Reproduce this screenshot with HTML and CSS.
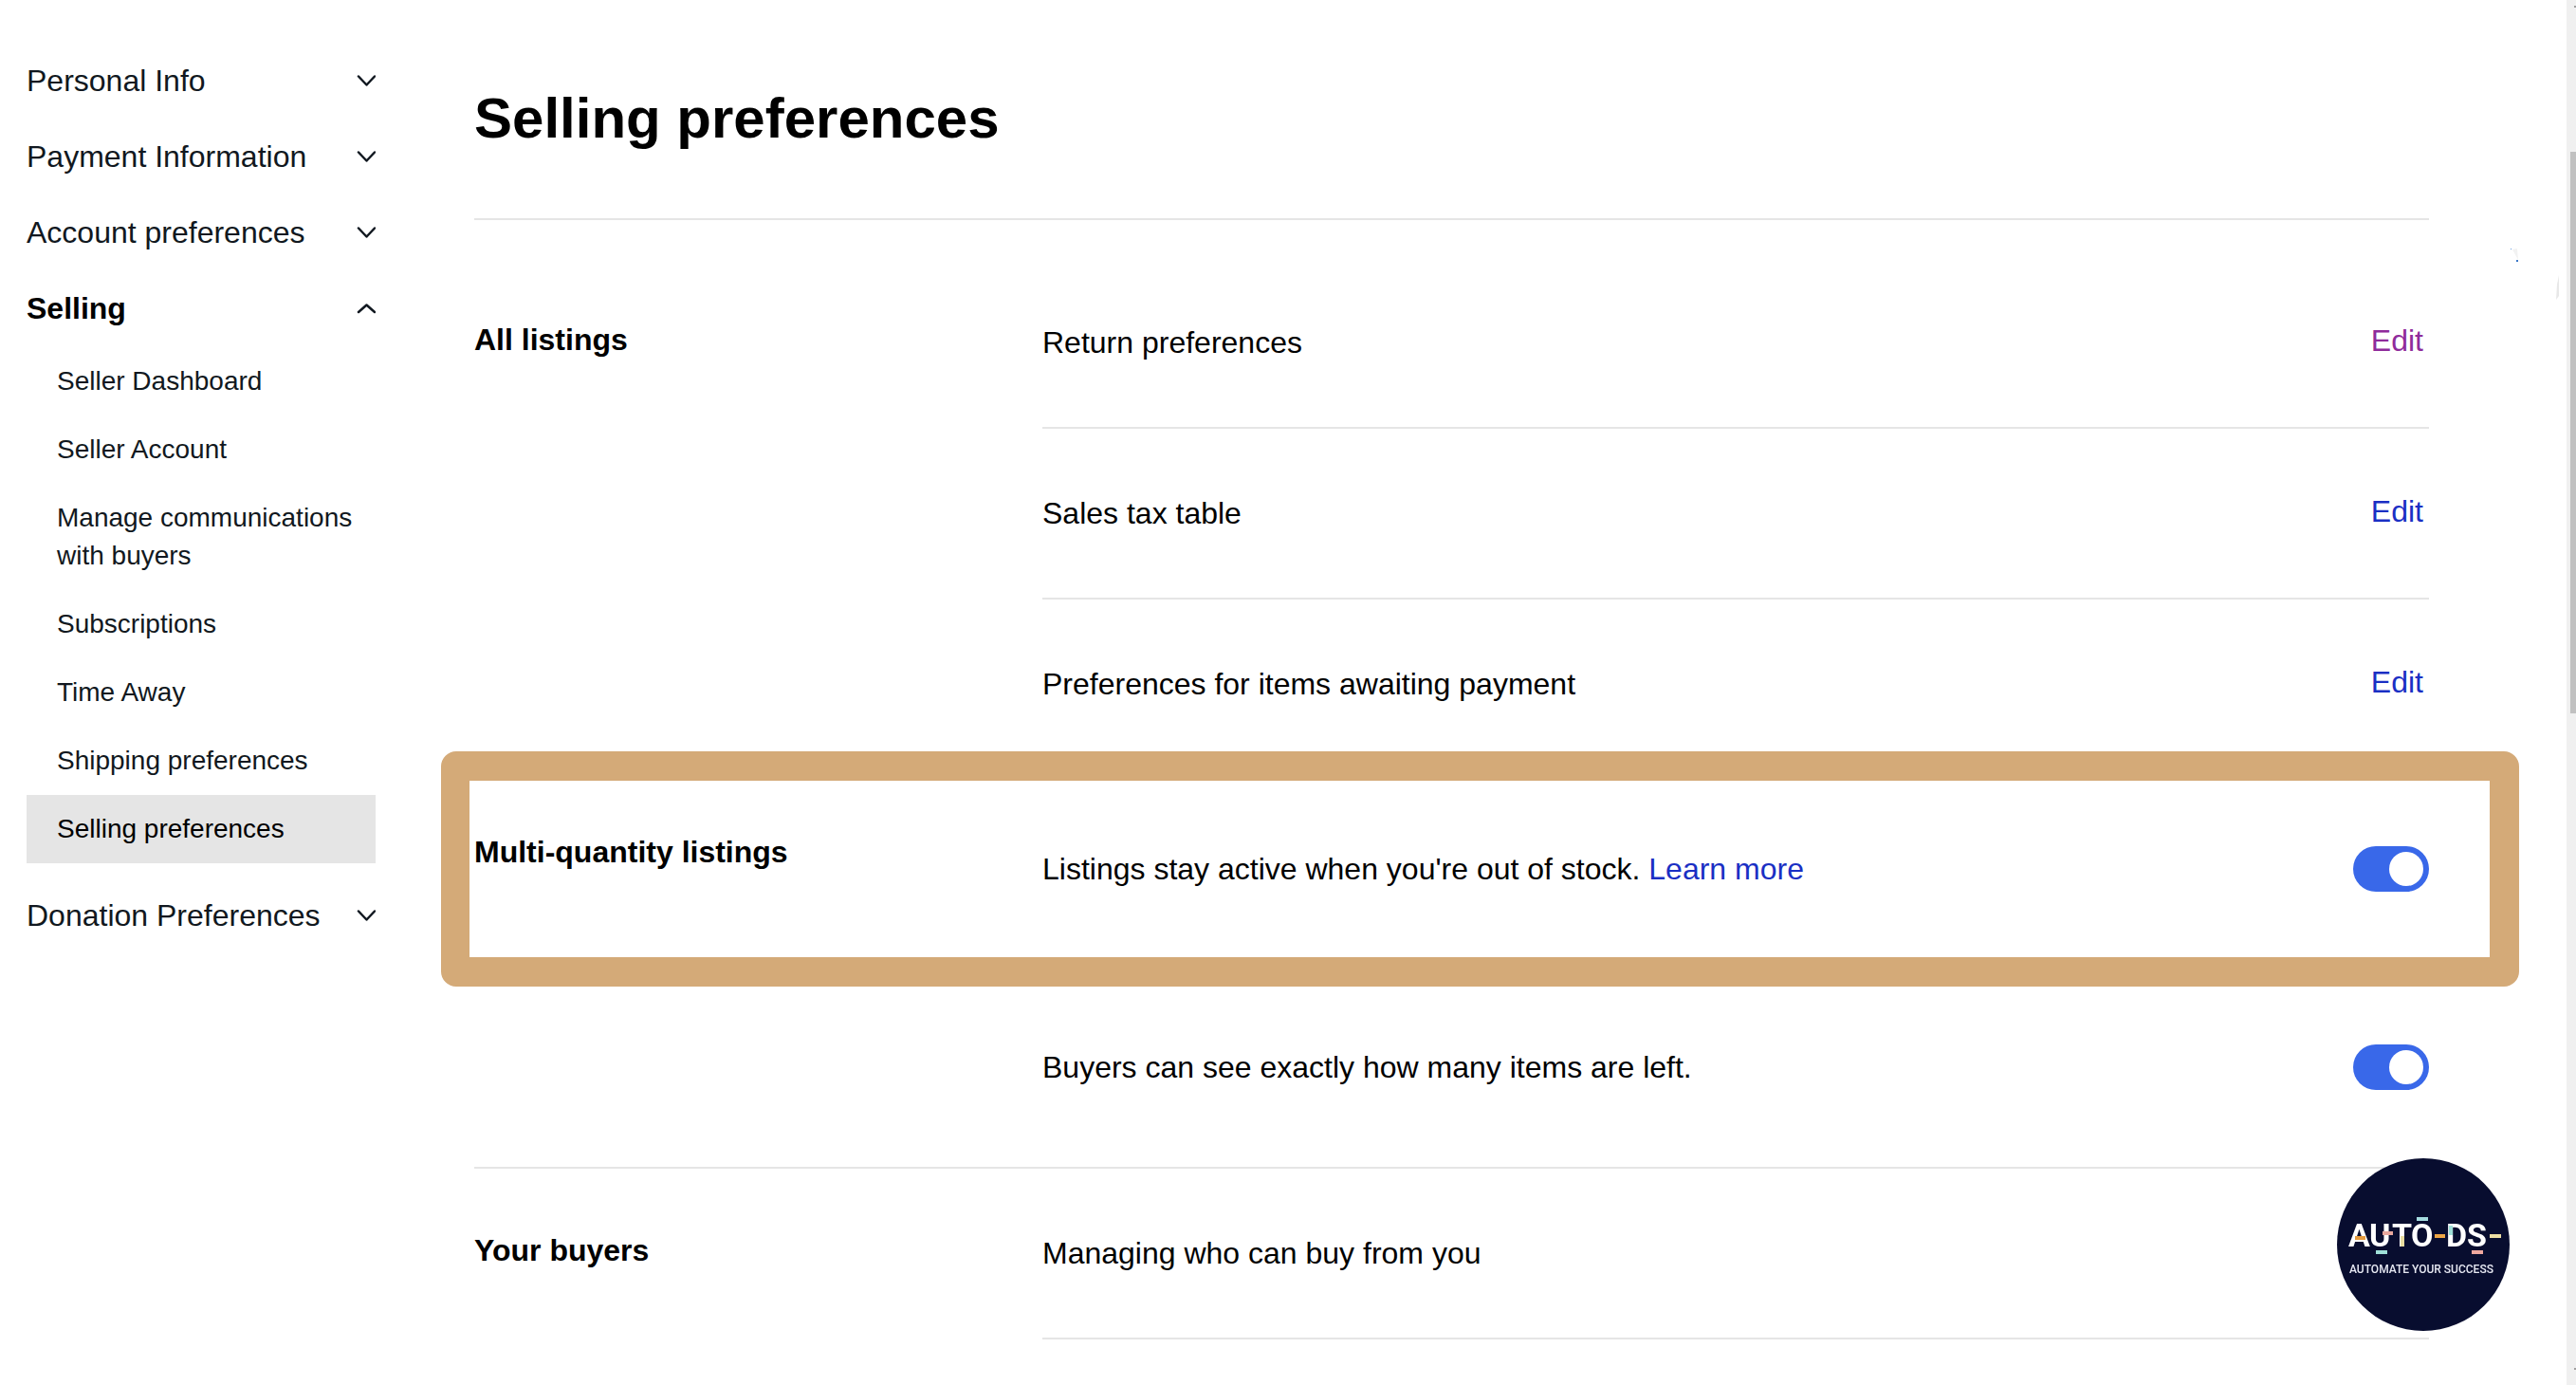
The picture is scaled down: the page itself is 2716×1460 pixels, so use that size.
FILE: index.html
```html
<!doctype html>
<html lang="en">
	<head>
		<meta charset="utf-8">
		<meta name="viewport" content="width=device-width">

		<title>Selling preferences</title>

		<link rel="stylesheet" href="styles.css">
	</head>

	<body>

		<div class="page">

			<nav class="sidebar">
				<button class="menu" type="button">Personal Info
					<svg class="chevron" viewBox="0 0 20 14"><path d="M2 2.5 L10.5 11.5 L19 2.5"/></svg>
				</button>
				<button class="menu" type="button">Payment Information
					<svg class="chevron" viewBox="0 0 20 14"><path d="M2 2.5 L10.5 11.5 L19 2.5"/></svg>
				</button>
				<button class="menu" type="button">Account preferences
					<svg class="chevron" viewBox="0 0 20 14"><path d="M2 2.5 L10.5 11.5 L19 2.5"/></svg>
				</button>
				<button class="menu open" type="button">Selling
					<svg class="chevron" viewBox="0 0 20 14"><path d="M2 11 L10.5 3.5 L19 11"/></svg>
				</button>
				<ul class="submenu">
					<li><a href="#">Seller Dashboard</a></li>
					<li><a href="#">Seller Account</a></li>
					<li><a href="#">Manage communications with buyers</a></li>
					<li><a href="#">Subscriptions</a></li>
					<li><a href="#">Time Away</a></li>
					<li><a href="#">Shipping preferences</a></li>
					<li><a class="current" href="#">Selling preferences</a></li>
				</ul>
				<button class="menu" type="button">Donation Preferences
					<svg class="chevron" viewBox="0 0 20 14"><path d="M2 2.5 L10.5 11.5 L19 2.5"/></svg>
				</button>
			</nav>

			<main>
				<h1>Selling preferences</h1>

				<section>
					<h2>All listings</h2>
					<div class="rows">
						<div class="row"><span>Return preferences</span><a class="edit visited" href="#">Edit</a></div>
						<div class="row"><span>Sales tax table</span><a class="edit" href="#">Edit</a></div>
						<div class="row"><span>Preferences for items awaiting payment</span><a class="edit" href="#">Edit</a></div>
					</div>
				</section>

				<section class="quantity">
					<h2>Multi-quantity listings</h2>
					<div class="rows">
						<div class="row tall">
							<span><label for="stay-active">Listings stay active when you're out of stock.</label> <a href="#">Learn more</a></span>
							<input class="switch" type="checkbox" id="stay-active" checked>
						</div>
						<div class="row tall">
							<label for="items-left">Buyers can see exactly how many items are left.</label>
							<input class="switch" type="checkbox" id="items-left" checked>
						</div>
					</div>
					<div class="highlight"></div>
				</section>

				<section>
					<h2>Your buyers</h2>
					<div class="rows">
						<div class="row line"><span>Managing who can buy from you</span></div>
					</div>
				</section>
			</main>

		</div>

		<svg class="badge" viewBox="0 0 182 182">
			<circle cx="91" cy="91" r="91" fill="#080d2f"/>
			<g fill="#fff" font-weight="bold" font-size="34">
				<text x="12" y="93">A</text>
				<text x="34" y="93">U</text>
				<text x="58" y="93">T</text>
				<text x="78" y="93">O</text>
				<text x="115" y="93">D</text>
				<text x="137" y="93">S</text>
			</g>
			<text x="13" y="121" fill="#e6e8f2" font-size="12" font-weight="500">AUTOMATE YOUR SUCCESS</text>
			<rect x="19" y="82" width="11" height="4" fill="#e59a3c"/>
			<rect x="41" y="97" width="12" height="4" fill="#9fe0d8"/>
			<rect x="48" y="77" width="11" height="4" fill="#e8a79d"/>
			<rect x="67" y="82" width="4" height="11" fill="#e8dca0"/>
			<rect x="84" y="62" width="12" height="4" fill="#a5dbe0"/>
			<rect x="103" y="80" width="11" height="4" fill="#eda545"/>
			<rect x="118" y="71" width="4" height="10" fill="#9fe0d8"/>
			<rect x="142" y="97" width="12" height="4" fill="#efa79e"/>
			<rect x="161" y="80" width="12" height="4" fill="#eedfa4"/>
		</svg>

		<svg class="specks" viewBox="0 0 56 56">
			<path d="M2 1 L7 0 L8 12 Z" fill="#f2f2f2"/>
			<rect x="0" y="0" width="1" height="1" fill="#6a9bdc"/>
			<rect x="6" y="12" width="2" height="2" fill="#3c78c8"/>
			<path d="M51 28 L51 50 L48 54 L49 38 Z" fill="#e8e8e8"/>
		</svg>

		<div class="scrollbar"><div class="thumb"></div></div>

	</body>
</html>
```
FILE: styles.css
```css
* {
	box-sizing: border-box;
}

body {
	margin: 0;
	background-color: #fff;
	color: #111820;
	font-family: "Liberation Sans", Arial, sans-serif;
	font-size: 32px;
	line-height: 40px;
}

a {
	color: #1a2fc4;
	text-decoration: none;
}

.page {
	display: flex;
	gap: 104px;
	padding: 0 155px 0 28px;
}

/* left menu */
.sidebar {
	flex: none;
	width: 368px;
	padding-top: 45px;
}

.menu {
	display: flex;
	justify-content: space-between;
	align-items: center;
	width: 100%;
	height: 80px;
	padding: 0;
	border: none;
	background: none;
	color: inherit;
	font: inherit;
	cursor: pointer;
}

.open {
	color: #000;
	font-weight: bold;
}

.chevron {
	width: 20px;
	height: 14px;
	fill: none;
	stroke: #111820;
	stroke-width: 2.5;
	stroke-linecap: round;
	stroke-linejoin: round;
}

.submenu {
	margin: 0 0 15px;
	padding: 1px 0 0;
	list-style: none;
	font-size: 28px;
}

.submenu a {
	display: block;
	padding: 16px 16px 16px 32px;
	color: #111820;
}

.submenu .current {
	background-color: #e5e5e5;
	color: #000;
}

/* settings */
main {
	flex: 1;
	color: #000;
}

h1 {
	margin: 0 0 40px;
	padding: 90px 0 70px;
	border-bottom: 2px solid #e5e5e5;
	font-size: 60px;
	line-height: 70px;
}

section {
	display: flex;
}

h2 {
	flex: none;
	width: 599px;
	margin: 0;
	padding-top: 66px;
	font-size: 32px;
	line-height: 40px;
}

.rows {
	flex: 1;
}

.row {
	display: flex;
	justify-content: space-between;
	align-items: center;
	height: 180px;
	border-bottom: 2px solid #e5e5e5;
}

.row:last-child {
	border-bottom-color: transparent;
}

.row.line {
	border-bottom-color: #e5e5e5;
}

.tall {
	height: 209px;
}

.edit {
	padding: 0 6px 4px 0;
}

.visited {
	color: #8f2b9b;
}

.quantity {
	position: relative;
	border-bottom: 2px solid #e5e5e5;
}

.switch {
	appearance: none;
	display: flex;
	align-items: center;
	justify-content: flex-end;
	width: 80px;
	height: 48px;
	margin: 0;
	padding: 6px;
	border-radius: 24px;
	background-color: #3968e9;
}

.switch::before {
	content: "";
	width: 36px;
	height: 36px;
	border-radius: 50%;
	background-color: #fff;
}

/* frame over the first quantity setting */
.highlight {
	position: absolute;
	top: -20px;
	left: -35px;
	right: -95px;
	height: 248px;
	border: 31px solid #d4aa78;
	border-left-width: 30px;
	border-radius: 16px;
	pointer-events: none;
}

.badge {
	position: fixed;
	right: 70px;
	bottom: 57px;
	width: 182px;
	height: 182px;
	font-family: Roboto, sans-serif;
}

.specks {
	position: absolute;
	top: 262px;
	right: 13px;
	width: 56px;
	height: 56px;
}

.scrollbar {
	position: fixed;
	top: 0;
	right: 0;
	bottom: 0;
	width: 10px;
	padding: 160px 0 0 4px;
	background-color: #f0f0f0;
}

.thumb {
	height: 592px;
	background-color: #c1c1c1;
}

/* edges of the scroll arrows */
.scrollbar::before, .scrollbar::after {
	content: "";
	position: absolute;
	right: 0;
	width: 2px;
	height: 2px;
	background-color: #a0a0a0;
}

.scrollbar::before {
	top: 6px;
}

.scrollbar::after {
	bottom: 16px;
}
```
